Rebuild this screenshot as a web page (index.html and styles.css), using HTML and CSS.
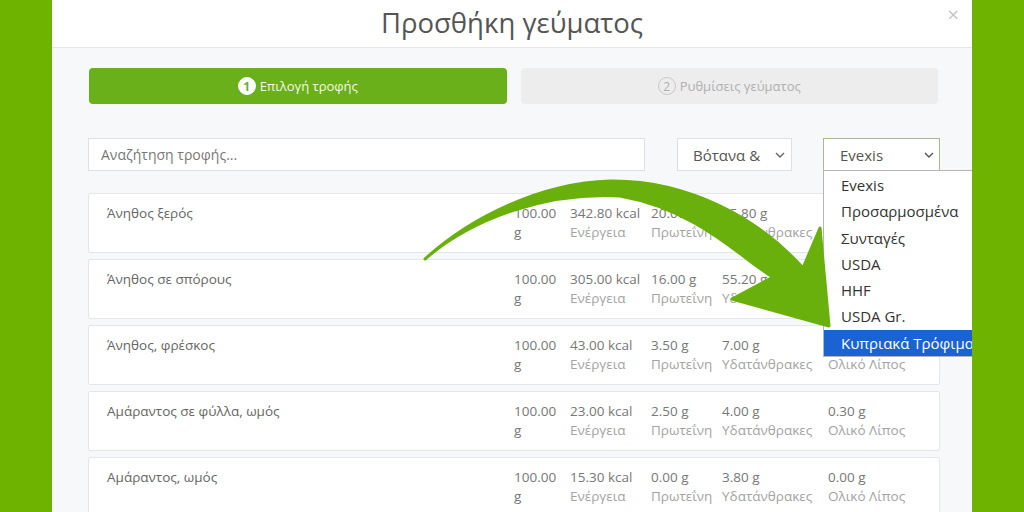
FILE: index.html
```html
<!DOCTYPE html>
<html lang="el">
<head>
<meta charset="UTF-8">
<meta name="viewport" content="width=device-width, initial-scale=1.0">
<title>Προσθήκη γεύματος</title>
<link rel="stylesheet" href="styles.css">
</head>
<body>

  <div class="modal">
    <div class="modal-header">
      <h1>Προσθήκη γεύματος</h1>
      <span class="close">&times;</span>
    </div>

    <div class="modal-body">
      <div class="steps">
        <div class="step active"><span class="num">1</span>Επιλογή τροφής</div>
        <div class="step"><span class="num">2</span>Ρυθμίσεις γεύματος</div>
      </div>

      <div class="filters">
        <div class="search">Αναζήτηση τροφής...</div>
        <div class="select select-cat">
          <span>Βότανα &amp;</span>
          <svg class="chev" width="10" height="6" viewBox="0 0 10 6"><path d="M1 1l4 4 4-4" fill="none" stroke="#666" stroke-width="1.4"/></svg>
        </div>
        <div class="select select-db">
          <span>Evexis</span>
          <svg class="chev" width="10" height="6" viewBox="0 0 10 6"><path d="M1 1l4 4 4-4" fill="none" stroke="#555" stroke-width="1.4"/></svg>
          <ul class="dropdown">
            <li>Evexis</li>
            <li>Προσαρμοσμένα</li>
            <li>Συνταγές</li>
            <li>USDA</li>
            <li>HHF</li>
            <li>USDA Gr.</li>
            <li class="selected">Κυπριακά Τρόφιμα</li>
          </ul>
        </div>
      </div>

      <div class="foods">
        <div class="food">
          <div class="name">Άνηθος ξερός</div>
          <div class="col qty">100.00 g</div>
          <div class="col kcal">342.80 kcal<small>Ενέργεια</small></div>
          <div class="col prot">20.00 g<small>Πρωτεΐνη</small></div>
          <div class="col carb">55.80 g<small>Υδατάνθρακες</small></div>
          <div class="col fat">29.50 g<small>Ολικό Λίπος</small></div>
        </div>
        <div class="food">
          <div class="name">Άνηθος σε σπόρους</div>
          <div class="col qty">100.00 g</div>
          <div class="col kcal">305.00 kcal<small>Ενέργεια</small></div>
          <div class="col prot">16.00 g<small>Πρωτεΐνη</small></div>
          <div class="col carb">55.20 g<small>Υδατάνθρακες</small></div>
          <div class="col fat">14.50 g<small>Ολικό Λίπος</small></div>
        </div>
        <div class="food">
          <div class="name">Άνηθος, φρέσκος</div>
          <div class="col qty">100.00 g</div>
          <div class="col kcal">43.00 kcal<small>Ενέργεια</small></div>
          <div class="col prot">3.50 g<small>Πρωτεΐνη</small></div>
          <div class="col carb">7.00 g<small>Υδατάνθρακες</small></div>
          <div class="col fat">1.10 g<small>Ολικό Λίπος</small></div>
        </div>
        <div class="food">
          <div class="name">Αμάραντος σε φύλλα, ωμός</div>
          <div class="col qty">100.00 g</div>
          <div class="col kcal">23.00 kcal<small>Ενέργεια</small></div>
          <div class="col prot">2.50 g<small>Πρωτεΐνη</small></div>
          <div class="col carb">4.00 g<small>Υδατάνθρακες</small></div>
          <div class="col fat">0.30 g<small>Ολικό Λίπος</small></div>
        </div>
        <div class="food">
          <div class="name">Αμάραντος, ωμός</div>
          <div class="col qty">100.00 g</div>
          <div class="col kcal">15.30 kcal<small>Ενέργεια</small></div>
          <div class="col prot">0.00 g<small>Πρωτεΐνη</small></div>
          <div class="col carb">3.80 g<small>Υδατάνθρακες</small></div>
          <div class="col fat">0.00 g<small>Ολικό Λίπος</small></div>
        </div>
      </div>
    </div>
  </div>

  <!-- seta de destaque por cima do modal -->
  <svg class="arrow" width="1024" height="512" viewBox="0 0 1024 512">
    <path d="M425 259 C470 218 540 183 610 181 C690 180 760 220 803 268 L820 228 L829 326 L732 299 L773 277 C745 262 700 210 620 196 C550 192 475 216 425 259 Z"
          fill="#6ab00c" stroke="#6ab00c" stroke-width="3" stroke-linejoin="round"/>
  </svg>

</body>
</html>
```

FILE: styles.css
```css
body {
  margin: 0;
  height: 512px;
  overflow: hidden;
  background-color: #6db300;
  font-family: "Open Sans", "Noto Sans", sans-serif;
  display: flex;
  justify-content: center;
  position: relative;
}
.modal {
  width: 920px;
  height: 512px;
  background-color: #f7f8fa;
  overflow: hidden;
  position: relative;
}
.modal-header {
  height: 47px;
  background-color: #fff;
  border-bottom: 1px solid #e4e7eb;
  display: flex;
  align-items: center;
  justify-content: center;
  position: relative;
}
.modal-header h1 {
  margin: 0 0 2px;
  font-size: 27.5px;
  font-weight: 400;
  color: #555;
}
.close {
  position: absolute;
  right: 13px;
  top: 1px;
  font-size: 20px;
  color: #c4c4c4;
}
.modal-body {
  padding: 20px 32px 0 36px;
}
.steps {
  display: grid;
  grid-template-columns: 1fr 1fr;
  gap: 14px;
  margin: 0 2px 0 1px;
}
.step {
  height: 36px;
  border-radius: 4px;
  background-color: #ededed;
  color: #b0b0b0;
  font-size: 13px;
  display: flex;
  align-items: center;
  justify-content: center;
  gap: 4px;
}
.step .num {
  width: 16px;
  height: 16px;
  border: 1px solid #c8c8c8;
  border-radius: 50%;
  display: flex;
  align-items: center;
  justify-content: center;
  font-size: 12px;
}
.step.active {
  background-color: #69b01a;
  color: #f6f9e0;
}
.step.active .num {
  background-color: #fff;
  border-color: #fff;
  color: #69b01a;
  font-weight: bold;
}
.filters {
  display: flex;
  margin-top: 34px;
  height: 33px;
}
.search {
  width: 557px;
  box-sizing: border-box;
  border: 1px solid #dde1e6;
  background-color: #fff;
  color: #777;
  font-size: 14px;
  padding-left: 12px;
  display: flex;
  align-items: center;
}
.select {
  box-sizing: border-box;
  border: 1px solid #dde1e6;
  background-color: #fff;
  color: #555;
  font-size: 15px;
  display: flex;
  align-items: center;
  justify-content: space-between;
  position: relative;
}
.select-cat {
  width: 115px;
  margin-left: 32px;
  padding: 0 6px 0 15px;
}
.select-db {
  width: 117px;
  margin-left: 31px;
  padding: 0 5px 0 16px;
  border-color: #a9b894;
}
.dropdown {
  position: absolute;
  top: 100%;
  left: -1px;
  width: 170px;
  margin: 0;
  padding: 1px 0 0;
  list-style: none;
  background-color: #fff;
  border: 1px solid #b5b5b5;
  z-index: 2;
}
.dropdown li {
  height: 26.3px;
  line-height: 26.3px;
  padding-left: 17px;
  font-size: 15px;
  color: #333;
}
.dropdown li.selected {
  background-color: #1b63d3;
  color: #fff;
}
.foods {
  margin-top: 22px;
  display: flex;
  flex-direction: column;
  gap: 6px;
}
.food {
  height: 60px;
  box-sizing: border-box;
  border: 1px solid #e3e6ea;
  border-radius: 2px;
  background-color: #fff;
  display: flex;
  padding-top: 10px;
  font-size: 13.5px;
  line-height: 19px;
  color: #777;
}
.food .name {
  flex: 1;
  padding-left: 18px;
  color: #666;
}
.col {
  flex-shrink: 0;
  box-sizing: border-box;
}
.col small {
  display: block;
  font-size: 13.5px;
  color: #a3a3a3;
}
.qty { width: 56px; padding-right: 12px; }
.kcal { width: 81px; }
.prot { width: 71px; }
.carb { width: 106px; }
.fat { width: 111px; }
.arrow {
  position: absolute;
  left: 0;
  top: 0;
  pointer-events: none;
  z-index: 5;
}
```
